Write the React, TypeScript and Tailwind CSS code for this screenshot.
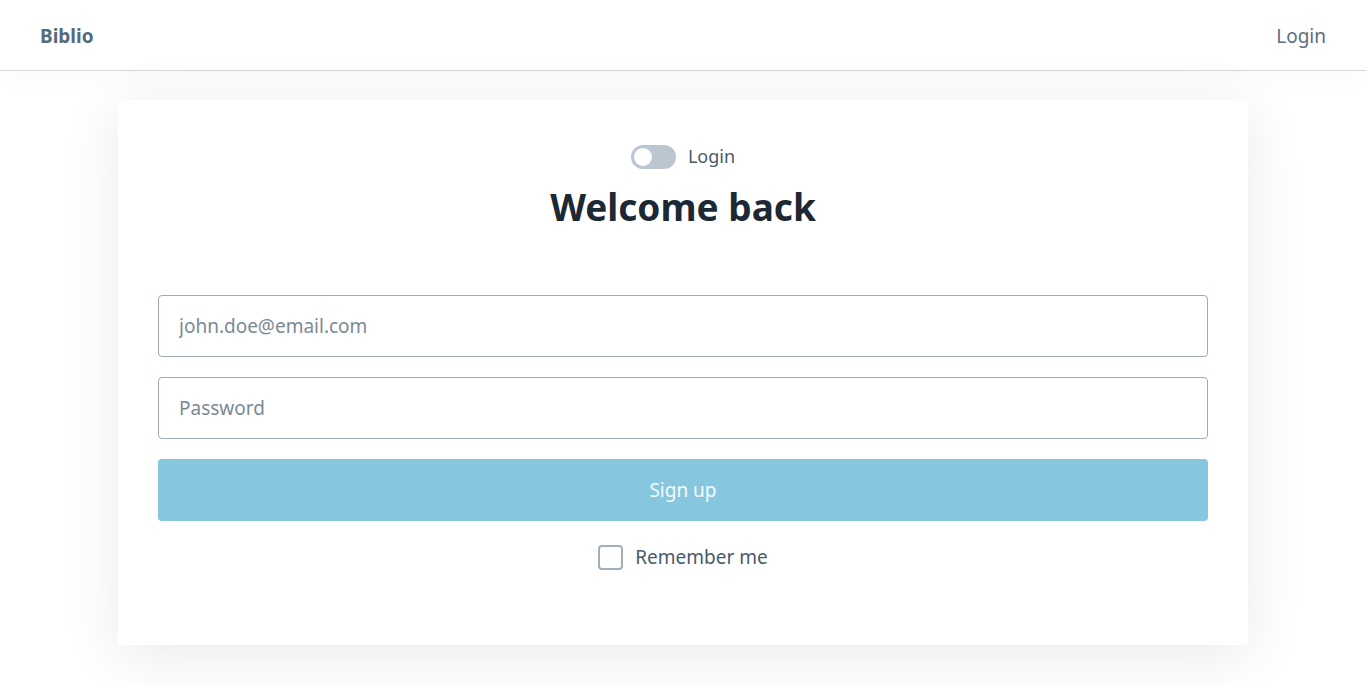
import { useState } from "react";

export default function App() {
  const [isLogin, setIsLogin] = useState(false);
  const [remember, setRemember] = useState(false);

  return (
    <div className="min-h-screen bg-white font-['Noto_Sans',sans-serif]">
      <header className="h-[71px] pt-[2px] flex items-center justify-between px-10 border-b border-[#d4d6d8] shadow-[0_0_40px_rgba(0,0,0,0.03)]">
        <span className="text-[19px] font-bold text-[#566a7c]">Biblio</span>
        <button className="text-[19px] text-[#5c6e80]">Login</button>
      </header>

      <main className="pt-[29px] pb-10">
        <div className="w-[1130px] mx-auto bg-white rounded-[4px] shadow-[0_10px_60px_rgba(0,0,0,0.09)] px-10 pt-[43px] pb-[73px]">
          <div className="flex flex-col items-center">
            <div className="flex items-center gap-3">
              <button
                onClick={() => setIsLogin(!isLogin)}
                className="w-[45px] h-[24px] rounded-full bg-[#bcc6d0] flex items-center px-[3px]"
              >
                <span className="w-[18px] h-[18px] rounded-full bg-white" />
              </button>
              <span className="text-[18px] text-[#4a5a6a]">Login</span>
            </div>
            <h1 className="mt-[9px] text-[37px] leading-[56px] font-bold text-[#1c2833]">
              Welcome back
            </h1>
          </div>

          <div className="mt-[60px] flex flex-col gap-5">
            <input
              placeholder="john.doe@email.com"
              className="h-[62px] px-5 rounded-[4px] border border-[#9eabb7] text-[19px] text-[#1c2833] placeholder:text-[#7b8995] outline-none"
            />
            <input
              type="password"
              placeholder="Password"
              className="h-[62px] px-5 rounded-[4px] border border-[#9eabb7] text-[19px] text-[#1c2833] placeholder:text-[#7b8995] outline-none"
            />
            <button className="h-[62px] rounded-[4px] bg-[#86c7df] text-[19px] text-[#f3fafd]">
              Sign up
            </button>
          </div>

          <label className="mt-[22px] flex items-center justify-center gap-3 cursor-pointer">
            <span
              onClick={() => setRemember(!remember)}
              className="w-[25px] h-[25px] rounded-[4px] border-2 border-[#a2aebb] bg-white"
            />
            <span className="text-[19px] text-[#4a5a6a]">Remember me</span>
          </label>
        </div>
      </main>
    </div>
  );
}
